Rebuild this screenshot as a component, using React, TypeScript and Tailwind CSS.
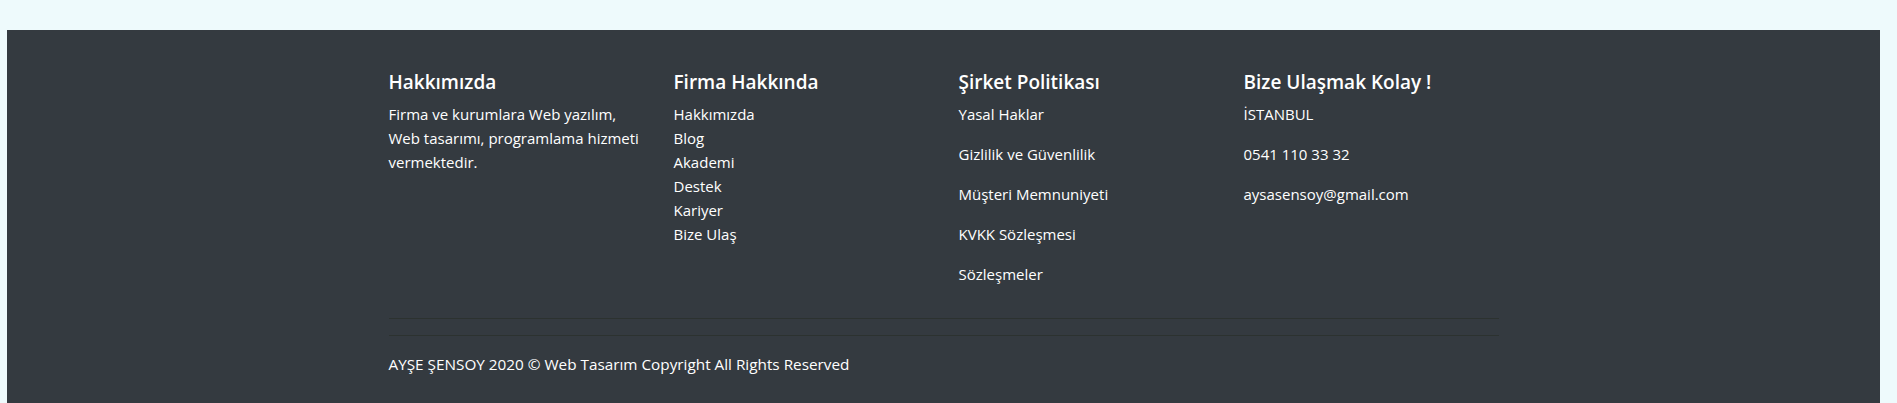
import React from 'react'

const font = { fontFamily: '"Open Sans", "Noto Sans", sans-serif' }

function Footer() {
  return (
    <footer className='bg-[#343a40] text-white pt-10 pb-10'>
      <div className='mx-auto w-[1110px] text-[15px] leading-6'>
        <div className='grid grid-cols-4 gap-[30px]'>
          <div>
            <h5 className='text-[19px] font-semibold leading-6 mb-2'>Hakkımızda</h5>
            <p>
              Firma ve kurumlara Web yazılım,
              <br />
              Web tasarımı, programlama hizmeti
              <br />
              vermektedir.
            </p>
          </div>
          <div>
            <h5 className='text-[19px] font-semibold leading-6 mb-2'>Firma Hakkında</h5>
            <ul>
              <li>Hakkımızda</li>
              <li>Blog</li>
              <li>Akademi</li>
              <li>Destek</li>
              <li>Kariyer</li>
              <li>Bize Ulaş</li>
            </ul>
          </div>
          <div>
            <h5 className='text-[19px] font-semibold leading-6 mb-2'>Şirket Politikası</h5>
            <p className='mb-4'>Yasal Haklar</p>
            <p className='mb-4'>Gizlilik ve Güvenlilik</p>
            <p className='mb-4'>Müşteri Memnuniyeti</p>
            <p className='mb-4'>KVKK Sözleşmesi</p>
            <p className='mb-4'>Sözleşmeler</p>
          </div>
          <div>
            <h5 className='text-[19px] font-semibold leading-6 mb-2'>Bize Ulaşmak Kolay !</h5>
            <p className='mb-4'>İSTANBUL</p>
            <p className='mb-4'>0541 110 33 32</p>
            <p className='mb-4'>aysasensoy@gmail.com</p>
          </div>
        </div>
        <hr className='mt-4 border-0 border-t border-[#2c3230]' />
        <div className='mt-4 border-t border-[#2c3230] pt-[16px]'>
          <p className='text-[15.3px]'>AYŞE ŞENSOY 2020 © Web Tasarım Copyright All Rights Reserved</p>
        </div>
      </div>
    </footer>
  )
}

export default function App() {
  return (
    <div className='min-h-screen bg-[#eefafc] pt-[30px] pl-[7px] pr-[17px]' style={font}>
      <Footer />
    </div>
  )
}
